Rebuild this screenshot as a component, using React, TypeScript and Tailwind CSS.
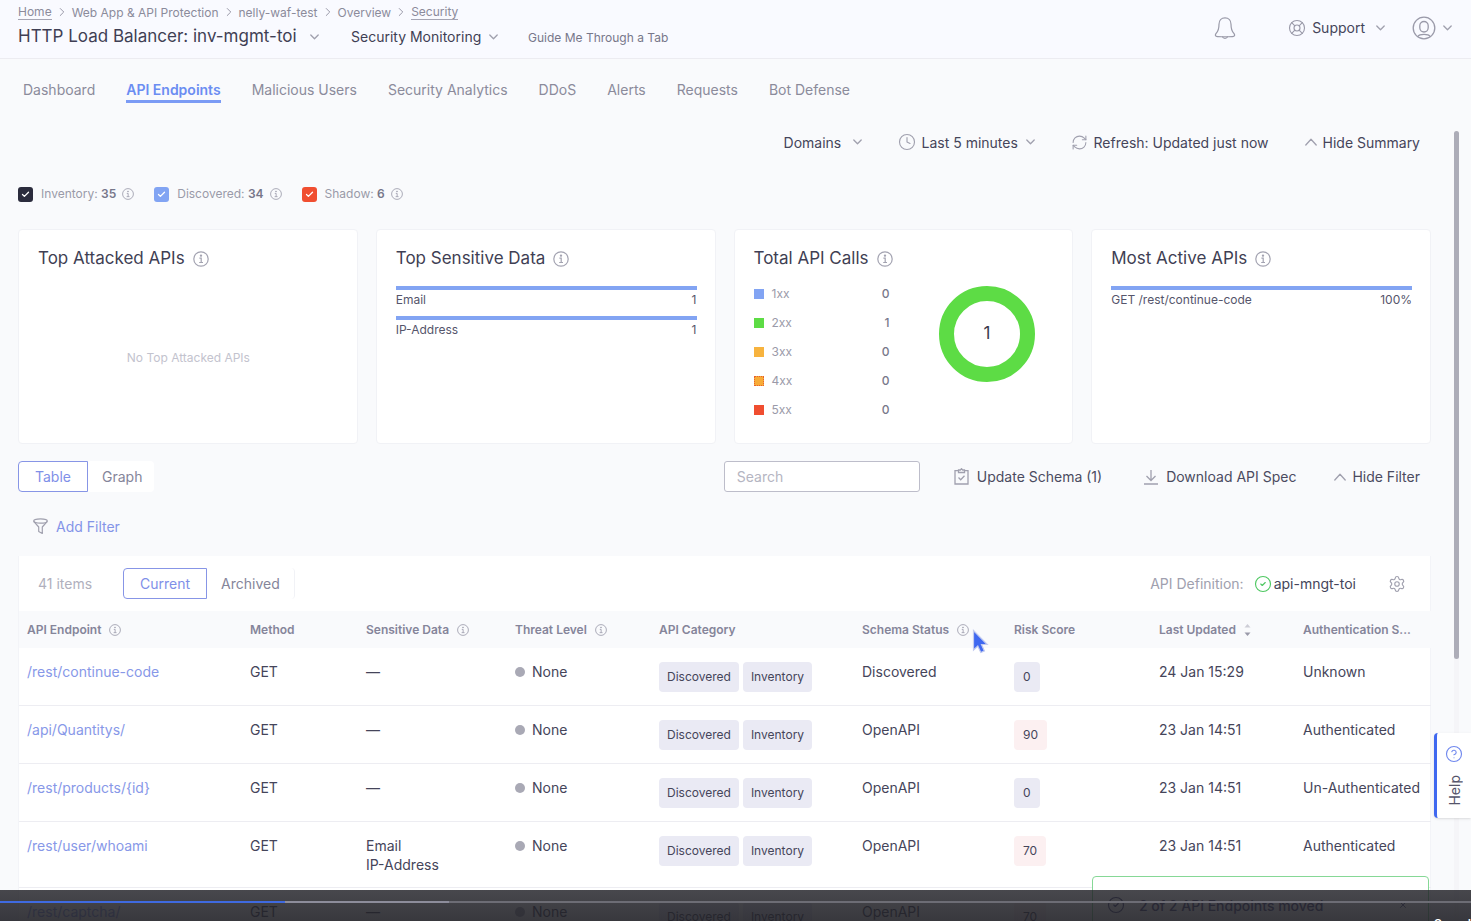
import type { ReactNode } from 'react'
import { Check, ChevronRight, CircleHelp, CircleCheck, Clock, LifeBuoy, RefreshCw, Settings, X } from 'lucide-react'

const tabs = ['Dashboard', 'API Endpoints', 'Malicious Users', 'Security Analytics', 'DDoS', 'Alerts', 'Requests', 'Bot Defense']

const crumbs = ['Home', 'Web App & API Protection', 'nelly-waf-test', 'Overview', 'Security']

const sources = [
  { id: 'inventory', label: 'Inventory:', count: 35, box: 'bg-[#2b2c3d]' },
  { id: 'discovered', label: 'Discovered:', count: 34, box: 'bg-[#82a4f3]' },
  { id: 'shadow', label: 'Shadow:', count: 6, box: 'bg-[#f04e30]' },
]

const codes = [
  { label: '1xx', value: 0, color: 'bg-[#82a4f3]' },
  { label: '2xx', value: 1, color: 'bg-[#5ddc45]' },
  { label: '3xx', value: 0, color: 'bg-[#f7b33e]' },
  { label: '4xx', value: 0, color: 'bg-[#f7ab38] border border-dotted border-[#e8602e]' },
  { label: '5xx', value: 0, color: 'bg-[#f04e30]' },
]

const columns = [
  { label: 'API Endpoint', width: 'w-[223px]', info: true },
  { label: 'Method', width: 'w-[116px]' },
  { label: 'Sensitive Data', width: 'w-[149px]', info: true },
  { label: 'Threat Level', width: 'w-[144px]', info: true },
  { label: 'API Category', width: 'w-[203px]' },
  { label: 'Schema Status', width: 'w-[152px]', info: true },
  { label: 'Risk Score', width: 'w-[145px]' },
  { label: 'Last Updated', width: 'w-[144px]', sort: true },
  { label: 'Authentication S...', width: 'w-[136px]' },
]

const rows = [
  { path: '/rest/continue-code', data: ['—'], schema: 'Discovered', risk: 0, updated: '24 Jan 15:29', auth: 'Unknown' },
  { path: '/api/Quantitys/', data: ['—'], schema: 'OpenAPI', risk: 90, updated: '23 Jan 14:51', auth: 'Authenticated' },
  { path: '/rest/products/{id}', data: ['—'], schema: 'OpenAPI', risk: 0, updated: '23 Jan 14:51', auth: 'Un-Authenticated' },
  { path: '/rest/user/whoami', data: ['Email', 'IP-Address'], schema: 'OpenAPI', risk: 70, updated: '23 Jan 14:51', auth: 'Authenticated' },
  { path: '/rest/captcha/', data: ['—'], schema: 'OpenAPI', risk: 70, updated: '23 Jan 14:51', auth: 'Authenticated' },
]

function InfoIcon({ size = 12 }: { size?: number }) {
  return (
    <svg width={size} height={size} viewBox="0 0 16 16" fill="none" stroke="currentColor" strokeWidth="1.2" className="shrink-0 text-[#a3a3b1]">
      <circle cx="8" cy="8" r="7.2" />
      <path d="M6.4 7.2H8.2V11.4M6.2 11.5H10" />
      <circle cx="8" cy="4.6" r="0.6" fill="currentColor" />
    </svg>
  )
}

function CaretDown({ className }: { className?: string }) {
  return (
    <svg width="9" height="6" viewBox="0 0 9 6" fill="none" stroke="#a0a0ae" strokeWidth="1.3" strokeLinecap="round" strokeLinejoin="round" className={className}>
      <path d="M.8 1 4.500 4.800 8.200 1" />
    </svg>
  )
}

function CaretUp() {
  return (
    <svg width="12" height="8" viewBox="0 0 12 8" fill="none" stroke="#a0a0ae" strokeWidth="1.3" strokeLinecap="round" strokeLinejoin="round">
      <path d="M.8 7 6 1.200 11.200 7" />
    </svg>
  )
}

function Dropdown({ label, name, className, gap = 'pr-5' }: { label: string; name: string; className?: string; gap?: string }) {
  return (
    <div className={`relative flex items-center ${className ?? ''}`}>
      <select aria-label={name} className={`appearance-none bg-transparent outline-none ${gap}`}>
        <option>{label}</option>
      </select>
      <CaretDown className="absolute right-0 pointer-events-none" />
    </div>
  )
}

function Card({ title, children }: { title: string; children: ReactNode }) {
  return (
    <section className="flex flex-col h-[215px] pl-[19px] pr-[18px] pt-[17px] bg-white border border-[#f1f2f6] rounded-sm">
      <h2 className="flex items-center gap-2 h-[23px] text-[17px] text-[#3f3f54]">
        {title}
        <InfoIcon size={16} />
      </h2>
      {children}
    </section>
  )
}

function Bar({ label, value }: { label: string; value: string }) {
  return (
    <div className="h-[30px]">
      <div className="h-1 bg-[#82a4f3]" />
      <div className="flex justify-between text-[12px] leading-[20px] text-[#55556b]">
        <span>{label}</span>
        <span>{value}</span>
      </div>
    </div>
  )
}

function Toggle({ items, right }: { items: [string, string]; right: string }) {
  return (
    <div className="flex h-[31px] text-[14px]">
      <button className="px-4 bg-white border border-[#8795e6] rounded-l text-[#7f8fe8]">{items[0]}</button>
      <button className={`pl-[14px] bg-white rounded-r text-[#85859a] ${right}`}>{items[1]}</button>
    </div>
  )
}

function Header() {
  return (
    <header className="flex justify-between h-[59px] pl-[18px] pr-[19px] border-b border-[#ececf1] bg-[#f9faff] shrink-0">
      <div className="pt-[3px]">
        <nav aria-label="Breadcrumb" className="flex items-center gap-[3px] h-[18px] text-[12px] text-[#8b8b9b]">
          {crumbs.map((c, i) => (
            <span key={c} className="flex items-center gap-[3px]">
              {i > 0 && <ChevronRight size={14} strokeWidth={1.500} />}
              <a href="#" className={i === 0 || i === 4 ? 'border-b border-[#a5a5b3] leading-[15px]' : 'leading-[15px]'}>{c}</a>
            </span>
          ))}
        </nav>
        <div className="flex items-baseline pt-[3px] text-[#3f3f54]">
          <Dropdown name="Load balancer" label="HTTP Load Balancer: inv-mgmt-toi" className="text-[17px]" gap="pr-[22px]" />
          <Dropdown name="Workspace section" label="Security Monitoring" className="ml-8 text-[14px]" gap="pr-4" />
          <button className="ml-[30px] text-[12px] text-[#77778a]">Guide Me Through a Tab</button>
        </div>
      </div>
      <div className="flex items-center h-[55px] text-[#9a9aa9]">
        <button aria-label="Notifications" className="mr-[52px]">
          <svg width="22" height="24" viewBox="0 0 22 24" fill="none" stroke="currentColor" strokeWidth="1.2" strokeLinejoin="round" strokeLinecap="round">
            <path d="M11 1.8c-3.7 0-6 2.8-6 6.4 0 4.700-1 7-2.700 9-1.300 1.500-1.300 2.800.2 3.100 2.400.6 14.600.6 17 0 1.500-.3 1.500-1.600.2-3.100-1.700-2-2.700-4.300-2.700-9 0-3.600-2.300-6.400-6-6.400Z" />
            <path d="M8.500 20.900c.7 1.900 4.300 1.900 5 0" />
          </svg>
        </button>
        <button className="flex items-center text-[14px] text-[#45455a]">
          <LifeBuoy size={18} strokeWidth={1.5} className="mr-[6px] text-[#9a9aa9]" />
          Support
          <CaretDown className="ml-[11px]" />
        </button>
        <button aria-label="Account" className="flex items-center ml-[27px] gap-[7px]">
          <svg width="24" height="24" viewBox="0 0 24 24" fill="none" stroke="currentColor" strokeWidth="1.3">
            <circle cx="12" cy="12" r="10.800" />
            <rect x="7.800" y="5.500" width="8.400" height="10.500" rx="4.200" />
            <path d="M6 20.500c1.500-2.800 10.500-2.800 12 0" />
          </svg>
          <CaretDown />
        </button>
      </div>
    </header>
  )
}

function Summary() {
  return (
    <div className="grid grid-cols-4 gap-[18px]">
      <Card title="Top Attacked APIs">
        <p className="pt-[79px] text-center text-[12px] text-[#c3c3ce]">No Top Attacked APIs</p>
      </Card>
      <Card title="Top Sensitive Data">
        <div className="pt-4">
          <Bar label="Email" value="1" />
          <Bar label="IP-Address" value="1" />
        </div>
      </Card>
      <Card title="Total API Calls">
        <div className="flex pt-[9px] gap-[49px]">
          <ul className="w-[136px]">
            {codes.map(c => (
              <li key={c.label} className="flex items-center h-[29px] text-[12px] text-[#9a9aa9]">
                <span className={`w-[10px] h-[10px] mr-2 ${c.color}`} />
                {c.label}
                <span className="ml-auto font-medium text-[#77778a]">{c.value}</span>
              </li>
            ))}
          </ul>
          <svg width="96" height="96" viewBox="0 0 96 96" className="mt-[7px]">
            <circle cx="48" cy="48" r="40.500" fill="none" stroke="#5ddc45" strokeWidth="15" />
            <text x="48" y="53" textAnchor="middle" fontSize="17" fill="#3a3a4c">1</text>
          </svg>
        </div>
      </Card>
      <Card title="Most Active APIs">
        <div className="pt-4">
          <Bar label="GET /rest/continue-code" value="100%" />
        </div>
      </Card>
    </div>
  )
}

function EndpointTable() {
  return (
    <table className="w-full table-fixed text-left text-[14px] leading-[19px] text-[#45455a]">
      <thead className="bg-[#f9fafc]">
        <tr>
          {columns.map(c => (
            <th key={c.label} className={`${c.width} h-[37px] pl-2 text-[12px] font-semibold text-[#85859a] whitespace-nowrap`}>
              <span className="flex items-center gap-2">
                {c.label}
                {c.info && <InfoIcon />}
                {c.sort && (
                  <svg width="7" height="12" viewBox="0 0 7 12">
                    <path d="M3.500 0 6.500 3.500h-6Z" fill="#cdcdd6" />
                    <path d="M3.500 12 6.500 8.500h-6Z" fill="#9a9aa9" />
                  </svg>
                )}
              </span>
            </th>
          ))}
        </tr>
      </thead>
      <tbody>
        {rows.map(r => (
          <tr key={r.path} className="border-b border-[#ededf2] align-top [&>td]:pl-2 [&>td]:pt-[14px] [&>td]:pb-[13px]">
            <td><a href="#" className="text-[#8798e8]">{r.path}</a></td>
            <td>GET</td>
            <td>{r.data.map(d => <div key={d}>{d}</div>)}</td>
            <td>
              <span className="flex items-center gap-[7px]">
                <span className="w-[10px] h-[10px] rounded-full bg-[#a9a9b5]" />
                None
              </span>
            </td>
            <td>
              <div className="flex gap-1 text-[12px]">
                <span className="px-2 leading-[30px] rounded-sm bg-[#eaeaf4]">Discovered</span>
                <span className="px-2 leading-[30px] rounded-sm bg-[#eaeaf4]">Inventory</span>
              </div>
            </td>
            <td>{r.schema}</td>
            <td>
              <span className={`inline-block align-top px-[9px] text-[12px] leading-[30px] rounded-sm ${r.risk ? 'bg-[#fcf0f1]' : 'bg-[#eaeaf4]'}`}>{r.risk}</span>
            </td>
            <td>{r.updated}</td>
            <td className="whitespace-nowrap">{r.auth}</td>
          </tr>
        ))}
      </tbody>
    </table>
  )
}

export default function App() {
  return (
    <div className="relative flex flex-col h-screen overflow-hidden bg-[#f9fafc] font-['Inter',sans-serif]">
      <Header />
      <nav aria-label="Sections" className="flex gap-[31px] pl-[23px] pt-5 text-[14px] text-[#8b8b9b] shrink-0">
        {tabs.map(t => (
          <a key={t} href="#" className={t === 'API Endpoints' ? 'h-6 leading-[21px] border-b-[3px] border-[#7b9bf5] font-semibold text-[#6b8df2]' : 'h-6 leading-[21px]'}>{t}</a>
        ))}
      </nav>

      <main className="flex flex-col pl-[18px] pr-10 shrink-0">
        <div className="flex items-center justify-end h-[30px] mt-6 pr-[11px] gap-9 text-[14px] text-[#45455a]">
          <Dropdown name="Domains" label="Domains" />
          <div className="flex items-center gap-[6px]">
            <Clock size={18} strokeWidth={1.500} className="text-[#a0a0ae]" />
            <Dropdown name="Time range" label="Last 5 minutes" gap="pr-4" />
          </div>
          <button className="flex items-center gap-[6px]">
            <RefreshCw size={17} strokeWidth={1.500} className="text-[#a0a0ae]" />
            Refresh: Updated just now
          </button>
          <button className="flex items-center gap-[6px]">
            <CaretUp />
            Hide Summary
          </button>
        </div>

        <div className="flex items-center h-6 mt-[25px] gap-5 text-[12px] text-[#9a9aa9]">
          {sources.map(s => (
            <div key={s.id} className="flex items-center">
              <span className="relative flex items-center justify-center">
                <input id={s.id} type="checkbox" defaultChecked className={`appearance-none w-[15px] h-[15px] rounded-[3px] ${s.box}`} />
                <Check size={9} strokeWidth={3.500} className="absolute text-white pointer-events-none" />
              </span>
              <label htmlFor={s.id} className="ml-2 mr-[6px]">
                {s.label} <b className="font-semibold text-[#77778a]">{s.count}</b>
              </label>
              <InfoIcon />
            </div>
          ))}
        </div>

        <div className="mt-[23px]">
          <Summary />
        </div>

        <div className="flex items-center h-[31px] mt-[17px] pr-[11px] text-[14px] text-[#4b4b60]">
          <Toggle items={['Table', 'Graph']} right="pr-3" />
          <input aria-label="Search" placeholder="Search" className="w-[196px] h-[31px] ml-auto mr-[34px] px-3 bg-white border border-[#bdbdca] rounded-[3px] outline-none placeholder:text-[#b5b5c2]" />
          <button className="flex items-center gap-2 mr-[42px]">
            <svg width="15" height="17" viewBox="0 0 15 17" fill="none" stroke="#a0a0ae" strokeWidth="1.300">
              <path d="M4 2.700H1V16h13V2.700h-3M4.500 4.500V2h1.800l1.200-1.300L8.700 2h1.800v2.500ZM4.500 9.500l2.200 2.200 3.800-3.900" />
            </svg>
            Update Schema (1)
          </button>
          <button className="flex items-center gap-2 mr-[38px]">
            <svg width="14" height="16" viewBox="0 0 14 16" fill="none" stroke="#a0a0ae" strokeWidth="1.300">
              <path d="M7 1v10.500M2.500 7 7 11.500 11.500 7M0 15h14" />
            </svg>
            Download API Spec
          </button>
          <button className="flex items-center gap-[6px]">
            <CaretUp />
            Hide Filter
          </button>
        </div>

        <button className="flex items-center gap-2 self-start h-6 mt-[22px] ml-[15px] text-[14px] text-[#8494e8]">
          <svg width="15" height="16" viewBox="0 0 15 16" fill="none" stroke="#a0a0ae" strokeWidth="1.200" strokeLinejoin="round">
            <ellipse cx="7.500" cy="3" rx="6.800" ry="2.200" />
            <path d="M.7 3.300 5.700 9v4.500l3.600 2V9l5-5.700" />
          </svg>
          Add Filter
        </button>

        <section className="mt-[18px] bg-white border-x border-[#f3f4f8]">
          <div className="flex items-center h-[55px] pl-[19px] pr-6 text-[14px]">
            <span className="mr-[31px] text-[#b0b0bd]">41 items</span>
            <Toggle items={['Current', 'Archived']} right="pr-[14px] border-r border-[#f1f2f6]" />
            <span className="ml-auto mr-[10px] text-[#a0a0ae]">API Definition:</span>
            <CircleCheck size={18} strokeWidth={1.500} className="mr-[2px] text-[#4fc862]" />
            <span className="text-[#45455a]">api-mngt-toi</span>
            <button aria-label="Table settings" className="ml-8 text-[#a0a0ae]">
              <Settings size={18} strokeWidth={1.500} />
            </button>
          </div>
          <EndpointTable />
        </section>
      </main>

      {/* page scroll thumb */}
      <div className="absolute right-3 top-[131px] bottom-0 w-[5px] bg-[#f5f5f8]">
        <div className="h-[528px] rounded-full bg-[#adadb8]" />
      </div>

      <button className="absolute right-0 top-[733px] flex flex-col items-center justify-between w-[37px] h-[85px] pt-3 pb-3 bg-white border-l-[3px] border-[#3f68f0] rounded-l-sm shadow-sm text-[14px] text-[#55556b]">
        <CircleHelp size={18} strokeWidth={1.500} className="text-[#7088ee]" />
        <span className="rotate-180 [writing-mode:vertical-rl]">Help</span>
      </button>

      <div role="status" className="absolute right-[42px] top-[876px] flex items-center w-[337px] h-[58px] pl-[14px] pr-5 bg-white border border-[#86d896] rounded text-[14px] font-medium text-[#4b4b80]">
        <CircleCheck size={18} strokeWidth={1.500} className="mr-[14px]" />
        2 of 2 API Endpoints moved
        <X size={10} className="ml-auto" />
      </div>

      <svg width="18" height="26" viewBox="0 0 18 26" className="absolute left-[972px] top-[629px]">
        <path d="M1.500 1.500v19.500l4.300-4 3 6.500 3.600-1.600-2.900-6.400h5.700Z" fill="#3f68f0" stroke="#c3cbef" strokeWidth="1.200" />
      </svg>

      {/* player controls sliding in from the bottom */}
      <div className="absolute inset-x-0 bottom-0 h-[31px] overflow-hidden bg-linear-to-b from-[#222228]/83 to-[#222228]/90">
        <div className="flex h-[2px] mt-[11px] bg-[#6d6d75]">
          <div className="w-[285px] bg-[#3f6ae0]" />
          <div className="w-[164px] bg-[#8d8d9b]" />
        </div>
        <div className="flex justify-end mt-3 text-[12px] font-semibold text-white">Speed</div>
      </div>
    </div>
  )
}
